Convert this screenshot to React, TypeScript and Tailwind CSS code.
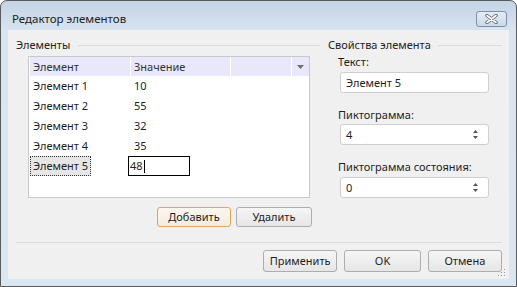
import React from "react";

const rows = [
  ["Элемент 1", "10"],
  ["Элемент 2", "55"],
  ["Элемент 3", "32"],
  ["Элемент 4", "35"],
];

function Btn({ label, w, h, orange }: { label: string; w: string; h: string; orange?: boolean }) {
  return (
    <div
      className={`${w} ${h} flex items-center justify-center rounded-[3px] border ${
        orange
          ? "border-[#e3a64f] bg-[linear-gradient(#fbf6ee,#f3ece0)]"
          : "border-[#adadad] bg-[linear-gradient(#f6f6f6,#e6e6e6)]"
      } text-[11px] leading-[14px] text-[#1e1e1e] whitespace-nowrap`}
    >
      {label}
    </div>
  );
}

function SpinArrows() {
  return (
    <svg width="7" height="11" viewBox="0 0 7 11" className="mr-[9px]">
      <path d="M1 4 L3.5 1 L6 4 Z" fill="#555" />
      <path d="M1 7 L3.5 10 L6 7 Z" fill="#555" />
    </svg>
  );
}

export default function App() {
  return (
    <div className="w-[517px] h-[287px] font-['Noto_Sans','Open_Sans',sans-serif] text-[#1e1e1e] whitespace-nowrap">
      <div className="w-[517px] h-[287px] flex flex-col border border-[#5a5a5a] rounded-t-[7px] bg-[linear-gradient(#c4d3e5,#d9e4f1_30px,#dbe6f3)] overflow-hidden">
        {/* title bar */}
        <div className="h-[29px] flex items-start">
          <div className="pl-[11px] pt-[11px] text-[11.5px] leading-[14px] text-[#222]">Редактор элементов</div>
          <div className="ml-auto mr-[9px] mt-[10px] w-[31px] h-[16px] rounded-[3px] border border-[#7f91a8] bg-[linear-gradient(#e3ebf5,#cdd9e8)] flex items-center justify-center">
            <svg width="13" height="10" viewBox="0 0 13 10">
              <path d="M2 1.5 L11 8.5 M11 1.5 L2 8.5" stroke="#5d6470" strokeWidth="3.4" strokeLinecap="round" />
              <path d="M2 1.5 L11 8.5 M11 1.5 L2 8.5" stroke="#ffffff" strokeWidth="1.6" strokeLinecap="round" />
            </svg>
          </div>
        </div>
        {/* client */}
        <div className="relative mx-[7px] h-[249px] bg-[#f0f0f0] flex flex-col pl-[8px] pr-[7px] pt-[8px] text-[11px] leading-[14px]">
          <div className="flex">
            {/* left group */}
            <div className="w-[304px] flex flex-col">
              <div className="h-[14px] flex items-center">
                <span className="text-[#222]">Элементы</span>
                <div className="flex-1 h-px bg-[#dcdcdc] ml-[8px]" />
              </div>
              <div className="ml-[12px] mt-[4px] w-[282px] h-[142px] border border-[#c9c9c9] bg-white flex flex-col">
                <div className="h-[19px] flex gap-[1px] ml-[1px] text-[#333]">
                  <div className="w-[100px] bg-[#e8e8fa] flex items-center pl-[3px]">Элемент</div>
                  <div className="w-[99px] bg-[#e8e8fa] flex items-center pl-[3px]">Значение</div>
                  <div className="w-[60px] bg-[#e8e8fa]" />
                  <div className="w-[17px] bg-[#e8e8fa] flex items-center justify-center">
                    <svg width="7" height="4" viewBox="0 0 7 4">
                      <path d="M0 0 L7 0 L3.5 4 Z" fill="#6d6d6d" />
                    </svg>
                  </div>
                </div>
                {rows.map(([a, b]) => (
                  <div key={a} className="h-[20px] flex items-center">
                    <div className="w-[101px] pl-[4px]">{a}</div>
                    <div className="pl-[4px]">{b}</div>
                  </div>
                ))}
                <div className="h-[20px] flex items-start">
                  <div className="w-[101px] pl-[1px]">
                    <div className="w-[61px] h-[20px] border border-dotted border-[#333] bg-[#e6e6e6] flex items-center pl-[2px]">
                      Элемент 5
                    </div>
                  </div>
                  <div className="ml-[-2px] w-[62px] h-[20px] border border-black bg-white flex items-center pl-[1px]">
                    48<span className="inline-block w-px h-[13px] bg-black ml-[1px]" />
                  </div>
                </div>
              </div>
              <div className="mt-[9px] pl-[141px] flex gap-[5px]">
                <Btn label="Добавить" w="w-[74px]" h="h-[20px]" orange />
                <Btn label="Удалить" w="w-[76px]" h="h-[20px]" />
              </div>
            </div>
            {/* right group */}
            <div className="w-[182px] flex flex-col">
              <div className="h-[14px] flex items-center pl-[8px]">
                <span className="text-[#222]">Свойства элемента</span>
                <div className="flex-1 h-px bg-[#dcdcdc] ml-[7px]" />
              </div>
              <div className="pl-[18px] mt-[3px]">Текст:</div>
              <div className="ml-[20px] mt-[3px] w-[149px] h-[21px] rounded-[3px] border border-[#cfcfcf] bg-white flex items-center pl-[5px]">
                Элемент 5
              </div>
              <div className="pl-[18px] mt-[15px]">Пиктограмма:</div>
              <div className="ml-[20px] mt-[2px] w-[149px] h-[21px] rounded-[3px] border border-[#cfcfcf] bg-white flex items-center pl-[5px]">
                <span className="flex-1">4</span>
                <SpinArrows />
              </div>
              <div className="pl-[18px] mt-[15px]">Пиктограмма состояния:</div>
              <div className="ml-[20px] mt-[3px] w-[149px] h-[21px] rounded-[3px] border border-[#cfcfcf] bg-white flex items-center pl-[5px]">
                <span className="flex-1">0</span>
                <SpinArrows />
              </div>
            </div>
          </div>
          <div className="mt-[15px] h-px bg-[#dcdcdc]" />
          <div className="mt-[7px] pl-[247px] flex gap-[7px]">
            <Btn label="Применить" w="w-[75px]" h="h-[22px]" />
            <Btn label="OK" w="w-[77px]" h="h-[22px]" />
            <Btn label="Отмена" w="w-[75px]" h="h-[22px]" />
          </div>
          <svg width="10" height="10" viewBox="0 0 10 10" className="absolute right-[2px] bottom-[1px]">
            {[
              [7, 1],
              [4, 4],
              [7, 4],
              [1, 7],
              [4, 7],
              [7, 7],
            ].map(([x, y], i) => (
              <g key={i}>
                <rect x={x + 1} y={y + 1} width="1" height="1" fill="#ffffff" />
                <rect x={x} y={y} width="1" height="1" fill="#9a9a9a" />
              </g>
            ))}
          </svg>
        </div>
      </div>
    </div>
  );
}
